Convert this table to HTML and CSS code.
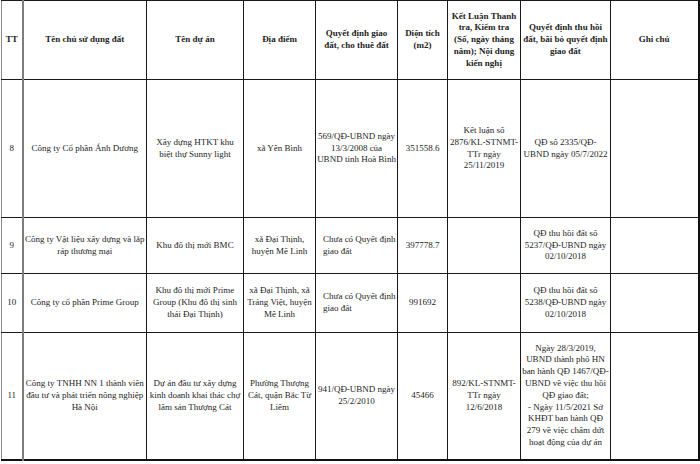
FILE: index.html
```html
<!DOCTYPE html>
<html lang="vi">
<head>
<meta charset="utf-8">
<title>Bảng dự án</title>
<link rel="stylesheet" href="styles.css">
</head>
<body>
<div class="sheet">
<table class="grid">
  <colgroup>
    <col class="c-tt">
    <col class="c-owner">
    <col class="c-project">
    <col class="c-place">
    <col class="c-decision">
    <col class="c-area">
    <col class="c-inspect">
    <col class="c-revoke">
    <col class="c-note">
  </colgroup>
  <thead>
    <tr class="r-head">
      <th class="tt">TT</th>
      <th>Tên chủ sử dụng đất</th>
      <th>Tên dự án</th>
      <th>Địa điểm</th>
      <th>Quyết định giao<br>đất, cho thuê đất</th>
      <th>Diện tích<br>(m2)</th>
      <th>Kết Luận Thanh<br>tra, Kiểm tra<br>(Số, ngày tháng<br>năm); Nội dung<br>kiến nghị</th>
      <th>Quyết định thu hồi<br>đất, bãi bỏ quyết định<br>giao đất</th>
      <th>Ghi chú</th>
    </tr>
  </thead>
  <tbody>
    <tr class="r8">
      <td class="tt">8</td>
      <td>Công ty Cổ phần Ánh Dương</td>
      <td>Xây dựng HTKT khu<br>biệt thự Sunny light</td>
      <td>xã Yên Bình</td>
      <td>569/QĐ-UBND ngày<br>13/3/2008 của<br>UBND tỉnh Hoà Bình</td>
      <td>351558.6</td>
      <td>Kết luận số<br>2876/KL-STNMT-<br>TTr ngày<br>25/11/2019</td>
      <td>QĐ số 2335/QĐ-<br>UBND ngày 05/7/2022</td>
      <td></td>
    </tr>
    <tr class="r9">
      <td class="tt">9</td>
      <td>Công ty Vật liệu xây dựng và lắp<br>ráp thương mại</td>
      <td>Khu đô thị mới BMC</td>
      <td>xã Đại Thịnh,<br>huyện Mê Linh</td>
      <td class="left">Chưa có Quyết định<br>giao đất</td>
      <td>397778.7</td>
      <td></td>
      <td>QĐ thu hồi đất số<br>5237/QĐ-UBND ngày<br>02/10/2018</td>
      <td></td>
    </tr>
    <tr class="r10">
      <td class="tt">10</td>
      <td>Công ty cổ phần Prime Group</td>
      <td>Khu đô thị mới Prime<br>Group (Khu đô thị sinh<br>thái Đại Thịnh)</td>
      <td>xã Đại Thịnh, xã<br>Tráng Việt, huyện<br>Mê Linh</td>
      <td class="left">Chưa có Quyết định<br>giao đất</td>
      <td>991692</td>
      <td></td>
      <td>QĐ thu hồi đất số<br>5238/QĐ-UBND ngày<br>02/10/2018</td>
      <td></td>
    </tr>
    <tr class="r11">
      <td class="tt">11</td>
      <td>Công ty TNHH NN 1 thành viên<br>đầu tư và phát triển nông nghiệp<br>Hà Nội</td>
      <td>Dự án đầu tư xây dựng<br>kinh doanh khai thác chợ<br>lâm sản Thượng Cát</td>
      <td>Phường Thượng<br>Cát, quận Bắc Từ<br>Liêm</td>
      <td>941/QĐ-UBND ngày<br>25/2/2010</td>
      <td>45466</td>
      <td>892/KL-STNMT-<br>TTr ngày<br>12/6/2018</td>
      <td>Ngày 28/3/2019,<br>UBND thành phố HN<br>ban hành QĐ 1467/QĐ-<br>UBND về việc thu hồi<br>QĐ giao đất;<br>- Ngày 11/5/2021 Sở<br>KHĐT ban hành QĐ<br>279 về việc chấm dứt<br>hoạt động của dự án</td>
      <td></td>
    </tr>
  </tbody>
</table>
</div>
</body>
</html>
```
FILE: styles.css
```css
html, body {
  margin: 0;
  padding: 0;
  background: #ffffff;
}

.sheet {
  padding: 0 0 0 1px;
  width: 699px;
}

.grid {
  border-collapse: collapse;
  table-layout: fixed;
  width: 697px;
  font-family: "Liberation Serif", "Times New Roman", serif;
  font-size: 9px;
  line-height: 11.8px;
  color: #1e1e1e;
  border-top: 1px solid #222;
  border-right: 2px solid #111;
  border-bottom: 2px solid #111;
  border-left: 1px solid #8c8c8c;
}

.c-tt { width: 21px; }
.c-owner { width: 124px; }
.c-project { width: 97px; }
.c-place { width: 72px; }
.c-decision { width: 82px; }
.c-area { width: 50px; }
.c-inspect { width: 73px; }
.c-revoke { width: 90px; }
.c-note { width: 88px; }

.grid th,
.grid td {
  border: 1px solid #1a1a1a;
  padding: 0 1px;
  text-align: center;
  vertical-align: middle;
  white-space: nowrap;
  overflow: visible;
}

.grid th {
  font-weight: bold;
}

.grid .tt {
  border-left: 1px solid #8c8c8c;
  border-right: 2px solid #7d7d7d;
}

.grid td.left {
  text-align: left;
  padding-left: 7px;
}

.r-head { height: 79px; }
.r8 { height: 138px; }
.r9 { height: 56px; }
.r10 { height: 59px; }
.r11 { height: 127px; }
```
